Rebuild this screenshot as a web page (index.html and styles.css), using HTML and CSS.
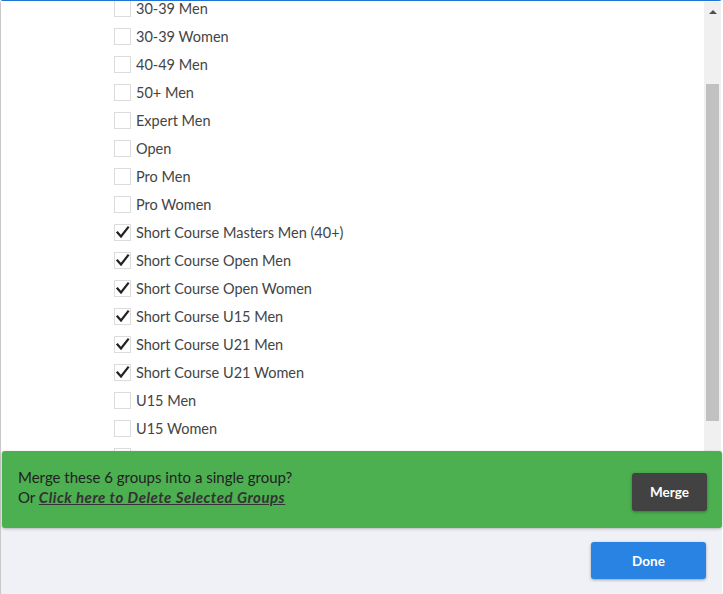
FILE: index.html
```html
<!DOCTYPE html>
<html>
<head>
<meta charset="utf-8">
<link rel="stylesheet" href="styles.css">
</head>
<body>
<div class="modal">
  <div class="list-area">
    <div class="list">
      <div class="row"><span class="box"></span><span class="label">30-39 Men</span></div>
      <div class="row"><span class="box"></span><span class="label">30-39 Women</span></div>
      <div class="row"><span class="box"></span><span class="label">40-49 Men</span></div>
      <div class="row"><span class="box"></span><span class="label">50+ Men</span></div>
      <div class="row"><span class="box"></span><span class="label">Expert Men</span></div>
      <div class="row"><span class="box"></span><span class="label">Open</span></div>
      <div class="row"><span class="box"></span><span class="label">Pro Men</span></div>
      <div class="row"><span class="box"></span><span class="label">Pro Women</span></div>
      <div class="row"><span class="box checked"><svg viewBox="0 0 17 17" width="17" height="17"><polyline points="3.5,8.5 7,12.5 14,3.5" /></svg></span><span class="label">Short Course Masters Men (40+)</span></div>
      <div class="row"><span class="box checked"><svg viewBox="0 0 17 17" width="17" height="17"><polyline points="3.5,8.5 7,12.5 14,3.5" /></svg></span><span class="label">Short Course Open Men</span></div>
      <div class="row"><span class="box checked"><svg viewBox="0 0 17 17" width="17" height="17"><polyline points="3.5,8.5 7,12.5 14,3.5" /></svg></span><span class="label">Short Course Open Women</span></div>
      <div class="row"><span class="box checked"><svg viewBox="0 0 17 17" width="17" height="17"><polyline points="3.5,8.5 7,12.5 14,3.5" /></svg></span><span class="label">Short Course U15 Men</span></div>
      <div class="row"><span class="box checked"><svg viewBox="0 0 17 17" width="17" height="17"><polyline points="3.5,8.5 7,12.5 14,3.5" /></svg></span><span class="label">Short Course U21 Men</span></div>
      <div class="row"><span class="box checked"><svg viewBox="0 0 17 17" width="17" height="17"><polyline points="3.5,8.5 7,12.5 14,3.5" /></svg></span><span class="label">Short Course U21 Women</span></div>
      <div class="row"><span class="box"></span><span class="label">U15 Men</span></div>
      <div class="row"><span class="box"></span><span class="label">U15 Women</span></div>
      <div class="row"><span class="box"></span></div>
    </div>
    <div class="scrollbar">
      <div class="arrow"></div>
      <div class="thumb"></div>
    </div>
  </div>
  <div class="merge-bar">
    <div class="merge-text">
      <div>Merge these 6 groups into a single group?</div>
      <div>Or <a class="delete-link" href="#">Click here to Delete Selected Groups</a></div>
    </div>
    <button class="btn btn-merge">Merge</button>
  </div>
  <div class="footer">
    <button class="btn btn-done">Done</button>
  </div>
</div>
</body>
</html>
```

FILE: styles.css
```css
* { box-sizing: border-box; }
html, body { margin: 0; padding: 0; background: #ffffff; }
body {
  font-family: "Lato", "Open Sans", sans-serif;
  color: #444;
  width: 723px;
  height: 594px;
  overflow: hidden;
}
.modal {
  width: 722px;
  height: 594px;
  border-left: 1px solid #c9c9c9;
  border-top: 1px solid #1f74d6;
  border-top-left-radius: 3px;
  border-top-right-radius: 3px;
  display: flex;
  flex-direction: column;
  background: #f0f1f6;
}
.list-area {
  height: 450px;
  display: flex;
  overflow: hidden;
  background: #fff;
  flex: none;
}
.list {
  flex: 1;
  padding-left: 113px;
  margin-top: -7px;
}
.row {
  height: 28px;
  display: flex;
  align-items: center;
  font-size: 14.5px;
  color: #444;
}
.box {
  width: 17px;
  height: 17px;
  border: 1px solid #dcdcdc;
  background: #fff;
  flex: none;
  position: relative;
}
.box svg {
  position: absolute;
  left: -1px;
  top: -1px;
}
.box svg polyline {
  fill: none;
  stroke: #222;
  stroke-width: 2.2;
  stroke-linecap: square;
}
.label { margin-left: 5px; }
.scrollbar {
  width: 17px;
  margin: 1px 1px 0 0;
  background: #f0f0f0;
  display: flex;
  flex-direction: column;
  align-items: center;
}
.arrow {
  margin-top: 8px;
  width: 0;
  height: 0;
  border-left: 4px solid transparent;
  border-right: 4px solid transparent;
  border-bottom: 4px solid #505050;
}
.thumb {
  margin-top: 70px;
  width: 13px;
  height: 337px;
  background: #c1c1c1;
}
.merge-bar {
  height: 77px;
  margin: 0 0 0 1px;
  background: #4caf50;
  border-radius: 3px;
  box-shadow: 0 1px 3px rgba(0,0,0,0.25);
  display: flex;
  align-items: center;
  justify-content: space-between;
  padding: 0 15px 0 16px;
  position: relative;
  z-index: 1;
  flex: none;
}
.merge-text {
  font-size: 15px;
  line-height: 20px;
  color: #222;
  margin-top: -5px;
}
.delete-link {
  color: #333;
  font-style: italic;
  font-weight: 700;
  letter-spacing: 0.5px;
  text-decoration: underline;
}
.btn {
  border: none;
  border-radius: 3px;
  color: #fff;
  font-family: "Lato", "Open Sans", sans-serif;
  font-weight: 700;
  font-size: 13.5px;
  box-shadow: 0 1px 3px rgba(0,0,0,0.35);
}
.btn-merge {
  width: 75px;
  height: 38px;
  background: #424242;
  margin-top: 5px;
}
.footer {
  flex: 1;
  display: flex;
  justify-content: flex-end;
  align-items: flex-start;
  padding: 14px 16px 0 0;
  background: #f0f1f6;
}
.btn-done {
  width: 115px;
  height: 37px;
  background: #2883e2;
}
```
